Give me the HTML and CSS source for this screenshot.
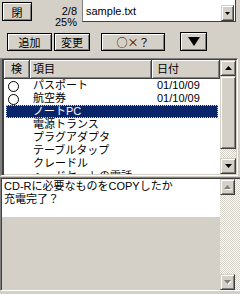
FILE: index.html
```html
<!DOCTYPE html>
<html lang="ja">
<head>
    <meta charset="UTF-8">
    <meta name="viewport" content="width=device-width, initial-scale=1.0">
    <title>チェックリスト</title>
    <link rel="stylesheet" href="styles.css">
</head>
<body>
    <div class="app">
        <!-- 上段: 閉じる・進捗・ファイル選択 -->
        <div class="topbar">
            <button class="btn btn-close">閉</button>
            <div class="status">
                <div>2/8</div>
                <div>25%</div>
            </div>
            <div class="combo">
                <span class="combo-text">sample.txt</span>
                <span class="combo-drop">
                    <svg width="5" height="3" viewBox="0 0 5 3"><polygon points="0,0 5,0 2.5,3" fill="#000"/></svg>
                </span>
            </div>
        </div>

        <!-- 操作ボタン -->
        <div class="toolbar">
            <button class="btn btn-add">追加</button>
            <button class="btn btn-edit">変更</button>
            <button class="btn btn-mark"><span class="cjk">○×？</span></button>
            <button class="btn btn-down">
                <svg width="12" height="9" viewBox="0 0 12 9"><polygon points="0,0 12,0 6,9" fill="#000"/></svg>
            </button>
        </div>

        <!-- 項目リスト -->
        <div class="list">
            <div class="list-body">
                <div class="list-head">
                    <div class="head-cell col-check">検</div>
                    <div class="head-cell col-name">項目</div>
                    <div class="head-cell col-date">日付</div>
                </div>
                <div class="row">
                    <div class="col-check"><span class="mark"></span></div>
                    <div class="col-name">パスポート</div>
                    <div class="col-date">01/10/09</div>
                </div>
                <div class="row">
                    <div class="col-check"><span class="mark"></span></div>
                    <div class="col-name">航空券</div>
                    <div class="col-date">01/10/09</div>
                </div>
                <div class="row selected">
                    <div class="col-check"></div>
                    <div class="col-name">ノートPC</div>
                    <div class="col-date"></div>
                </div>
                <div class="row">
                    <div class="col-check"></div>
                    <div class="col-name">電源トランス</div>
                    <div class="col-date"></div>
                </div>
                <div class="row">
                    <div class="col-check"></div>
                    <div class="col-name">プラグアダプタ</div>
                    <div class="col-date"></div>
                </div>
                <div class="row">
                    <div class="col-check"></div>
                    <div class="col-name">テーブルタップ</div>
                    <div class="col-date"></div>
                </div>
                <div class="row">
                    <div class="col-check"></div>
                    <div class="col-name">クレードル</div>
                    <div class="col-date"></div>
                </div>
                <div class="row">
                    <div class="col-check"></div>
                    <div class="col-name">ヘッドセットの電話</div>
                    <div class="col-date"></div>
                </div>
            </div>
            <div class="vscroll">
                <div class="arrow">
                    <svg width="7" height="4" viewBox="0 0 7 4"><polygon points="0,4 7,4 3.5,0" fill="#000"/></svg>
                </div>
                <div class="thumb"></div>
                <div class="track"></div>
                <div class="arrow">
                    <svg width="7" height="4" viewBox="0 0 7 4"><polygon points="0,0 7,0 3.5,4" fill="#000"/></svg>
                </div>
            </div>
        </div>

        <!-- メモ欄 -->
        <div class="memo">
            <div class="memo-body">
                <div class="memo-text">CD-Rに必要なものをCOPYしたか<br>充電完了？</div>
            </div>
            <div class="memo-scroll">
                <div class="arrow">
                    <svg width="8" height="5" viewBox="0 0 8 5"><polygon points="1,5 8,5 4.5,1" fill="#fff"/><polygon points="0,4 7,4 3.5,0" fill="#808080"/></svg>
                </div>
                <div class="track"></div>
                <div class="arrow">
                    <svg width="8" height="5" viewBox="0 0 8 5"><polygon points="1,1 8,1 4.5,5" fill="#fff"/><polygon points="0,0 7,0 3.5,4" fill="#808080"/></svg>
                </div>
            </div>
        </div>
    </div>
</body>
</html>
```

FILE: styles.css
```css
* {
    box-sizing: border-box;
}
body {
    margin: 0;
    background-color: #d4d0c8;
    font-family: "Liberation Sans", "Noto Sans CJK JP", sans-serif;
    font-size: 11px;
    color: #000;
}
.app {
    width: 240px;
    height: 294px;
    overflow: hidden;
}
.cjk {
    font-family: "Noto Sans CJK JP", sans-serif;
}

/* ボタン共通 */
.btn {
    font-family: inherit;
    font-size: 11px;
    padding: 0;
    color: #000;
    background-color: #d4d0c8;
    border: 1px solid #000;
    box-shadow: inset 1px 1px #fff, inset -1px -1px #808080;
    display: flex;
    align-items: center;
    justify-content: center;
}

/* 上段 */
.topbar {
    display: flex;
    align-items: flex-start;
    height: 24px;
}
.btn-close {
    margin: 2px 0 0 2px;
    width: 30px;
    height: 19px;
}
.status {
    width: 45px;
    margin-top: 6px;
    line-height: 11px;
    text-align: right;
}
.combo {
    margin-left: 5px;
    width: 154px;
    height: 22px;
    background-color: #fff;
    border-left: 1px solid #808080;
    border-right: 1px solid #404040;
    border-bottom: 1px solid #404040;
    display: flex;
    align-items: center;
}
.combo-text {
    flex: 1;
    padding-left: 3px;
    padding-top: 1px;
}
.combo-drop {
    align-self: flex-end;
    width: 13px;
    height: 16px;
    margin-right: 1px;
    background-color: #d4d0c8;
    border: 1px solid;
    border-color: #d4d0c8 #404040 #404040 #d4d0c8;
    box-shadow: inset 1px 1px #fff, inset -1px -1px #808080;
    display: flex;
    align-items: center;
    justify-content: center;
}

/* 操作ボタン */
.toolbar {
    display: flex;
    align-items: flex-start;
    height: 18px;
    margin-top: 9px;
}
.btn-add {
    margin-left: 7px;
    width: 45px;
    height: 18px;
}
.btn-edit {
    margin-left: 2px;
    width: 36px;
    height: 18px;
}
.btn-mark {
    margin-left: 11px;
    width: 64px;
    height: 18px;
}
.btn-down {
    margin-left: 15px;
    margin-top: -1px;
    width: 27px;
    height: 19px;
}

/* リスト */
.list {
    display: flex;
    width: 238px;
    height: 118px;
    margin-top: 7px;
    border-style: solid;
    border-width: 1px 1px 1px 2px;
    border-color: #808080 #fff #fff #808080;
    box-shadow: inset 2px 0 #404040, inset 0 1px #404040, inset -1px -1px #d4d0c8;
    padding: 1px 1px 1px 2px;
}
.list-body {
    flex: 1;
    overflow: hidden;
    background-color: #fff;
}
.list-head {
    display: flex;
    height: 19px;
    background-color: #d4d0c8;
}
.head-cell {
    line-height: 18px;
    border-right: 1px solid #404040;
    border-bottom: 1px solid #404040;
    box-shadow: inset 1px 1px #fff, inset -1px -1px #808080;
}
.list-head .col-check {
    width: 26px;
    text-align: center;
}
.list-head .col-name {
    width: 122px;
    padding-left: 3px;
}
.list-head .col-date {
    width: 68px;
    padding-left: 5px;
}
.row {
    display: flex;
    height: 13px;
    line-height: 13px;
    margin: 0 2px;
    white-space: nowrap;
}
.row .col-check {
    width: 24px;
}
.row .col-name {
    width: 122px;
    padding-left: 3px;
}
.row .col-date {
    width: 66px;
    padding-left: 5px;
}
.mark {
    display: block;
    width: 11px;
    height: 11px;
    margin: 2px 0 0 2px;
    border: 1px solid #000;
    border-radius: 50%;
}
.row.selected {
    background-color: #0a246a;
    color: #fff;
    outline: 1px dotted #c8d0e8;
    outline-offset: -1px;
}

/* スクロールバー */
.vscroll {
    width: 16px;
    display: flex;
    flex-direction: column;
}
.arrow,
.thumb {
    background-color: #d4d0c8;
    border: 1px solid;
    border-color: #d4d0c8 #404040 #404040 #d4d0c8;
    box-shadow: inset 1px 1px #fff, inset -1px -1px #808080;
}
.arrow {
    height: 16px;
    display: flex;
    align-items: center;
    justify-content: center;
}
.thumb {
    height: 73px;
}
.track {
    flex: 1;
    background: repeating-conic-gradient(#d4d0c8 0 25%, #fff 0 50%) 0 0 / 2px 2px;
}

/* メモ欄 */
.memo {
    display: flex;
    width: 240px;
    height: 114px;
    margin-top: 1px;
    border-style: solid;
    border-width: 1px 0 1px 1px;
    border-color: #808080 #fff #fff #808080;
    box-shadow: inset 1px 1px #404040;
    padding: 1px 0 0 1px;
}
.memo-body {
    flex: 1;
}
.memo-text {
    height: 38px;
    background-color: #fff;
    padding: 1px 2px;
    line-height: 13px;
    white-space: nowrap;
}
.memo-scroll {
    width: 20px;
    display: flex;
    flex-direction: column;
    background: repeating-conic-gradient(#d4d0c8 0 25%, #fff 0 50%) 0 0 / 2px 2px;
}
.memo-scroll .arrow {
    width: 15px;
}
```
